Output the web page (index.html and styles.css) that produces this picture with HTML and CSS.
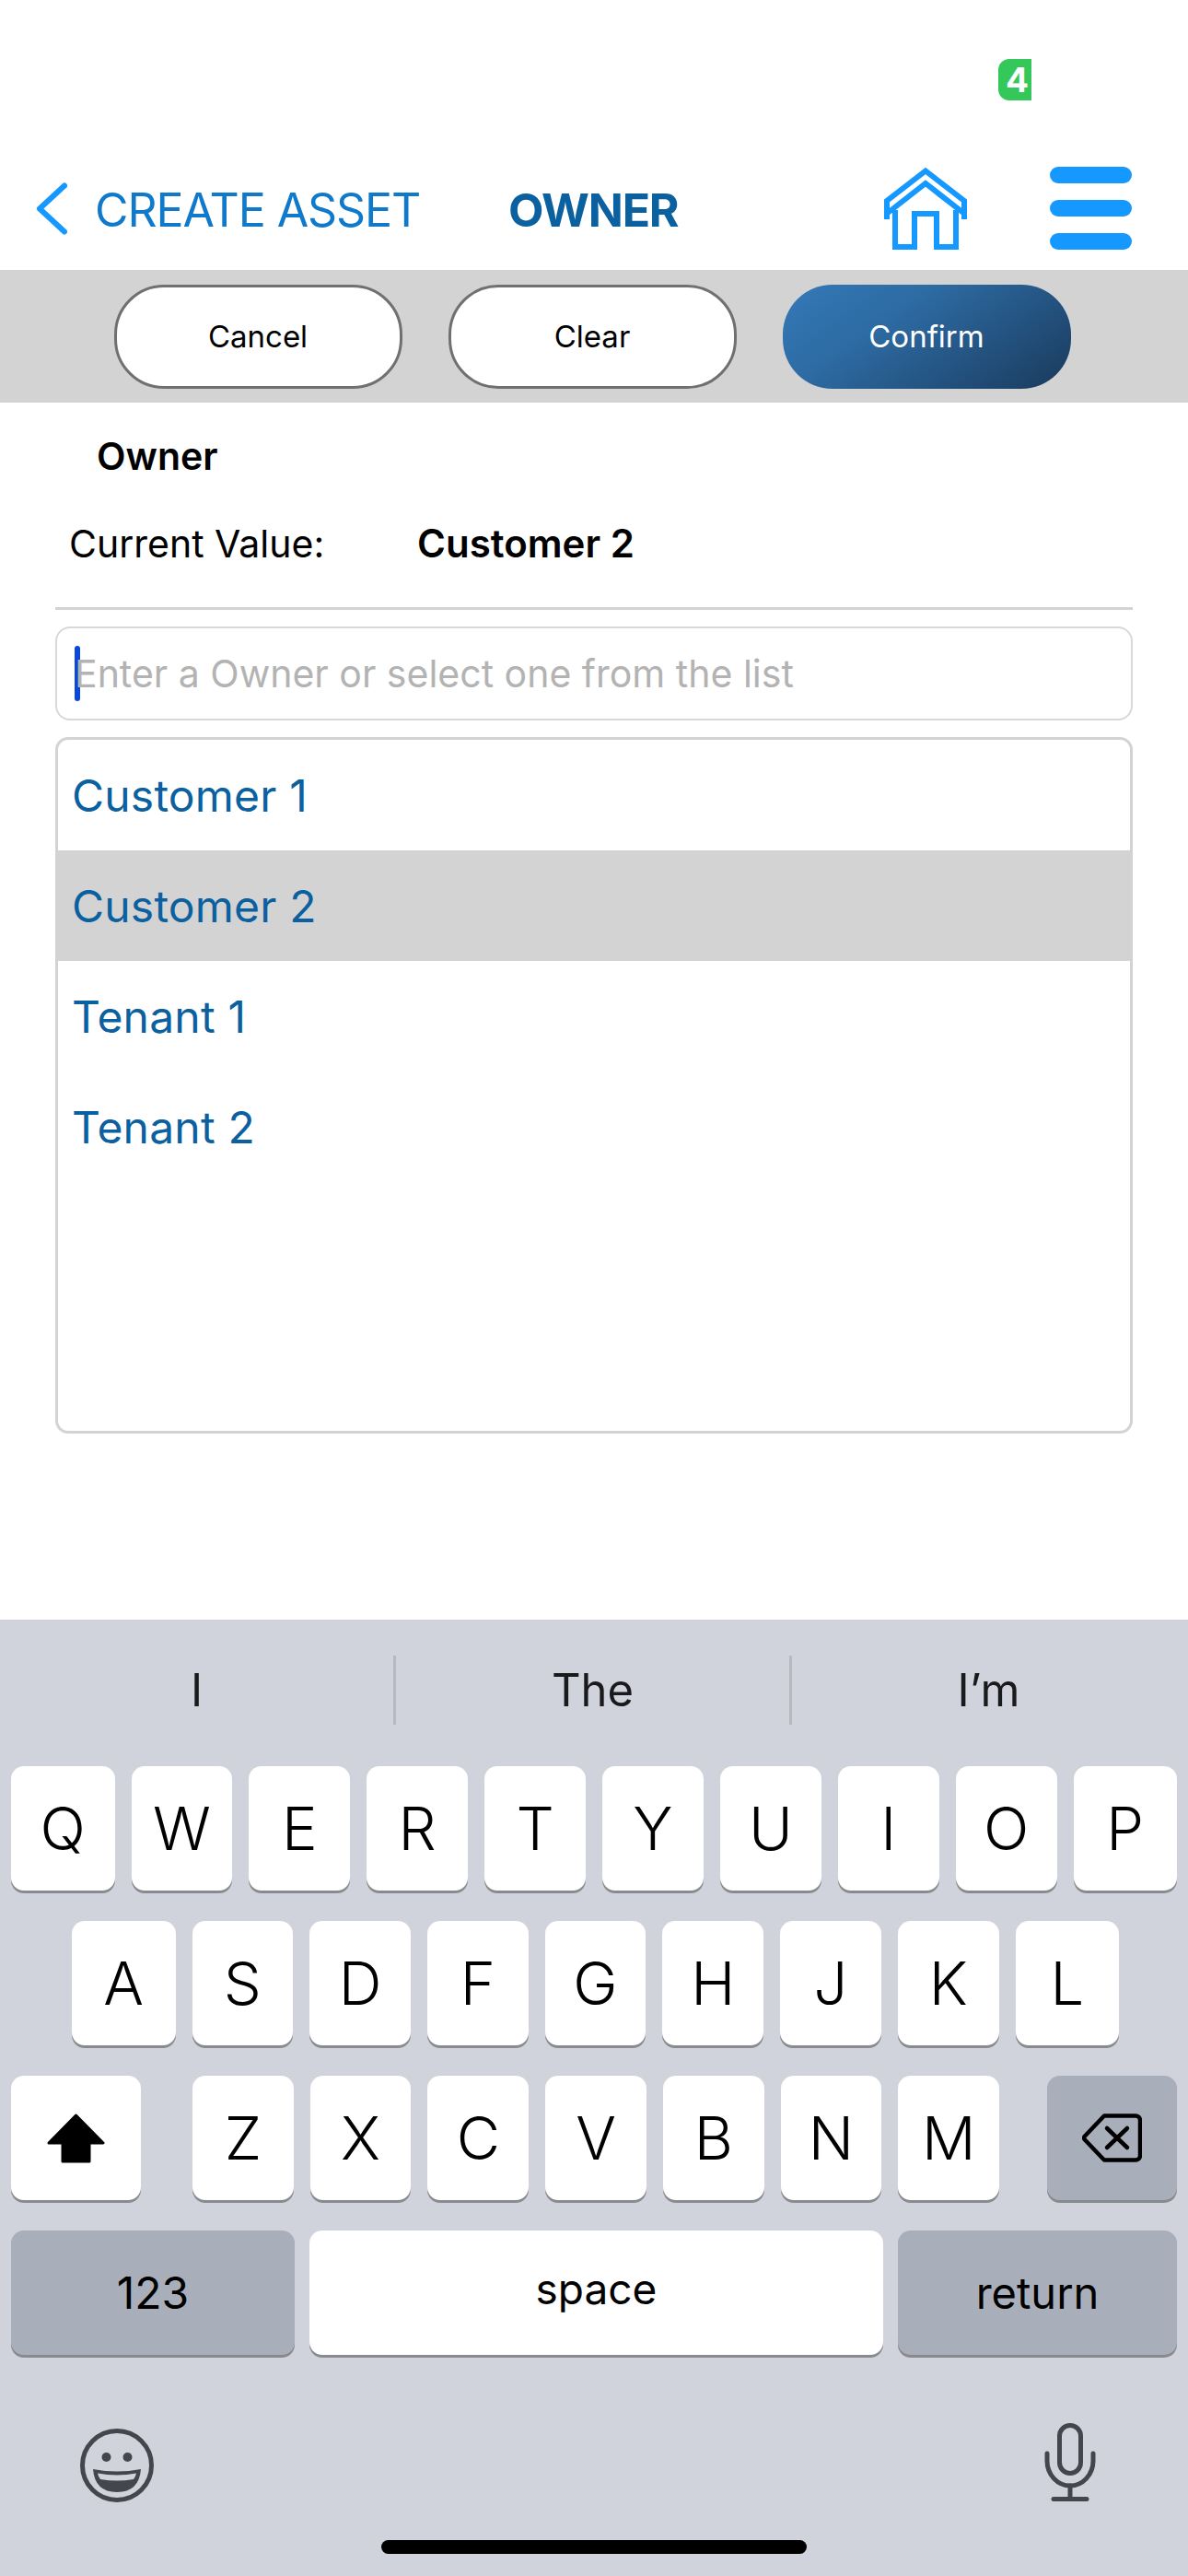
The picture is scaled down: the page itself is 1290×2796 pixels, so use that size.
FILE: index.html
```html
<!DOCTYPE html>
<html lang="en">
<head>
  <meta charset="UTF-8">
  <meta name="viewport" content="width=device-width, initial-scale=1.0">
  <title>Owner</title>
  <link rel="stylesheet" href="styles.css">
</head>
<body>

  <div class="status">
    <span class="badge">4</span>
  </div>

  <header class="nav">
    <div class="nav-back">
      <svg class="chevron" viewBox="0 0 34 57"><path d="M31 3.5 L4 28.5 L31 53.5"/></svg>
      <span>CREATE ASSET</span>
    </div>
    <div class="nav-title">OWNER</div>
    <svg class="home-icon" viewBox="0 0 90 90">
      <path d="M3 57 V37 L45 4.500 L87 37 V57"/>
      <path d="M4 50 L45 18 L86 50"/>
      <path d="M12 47 V87 H33 V51 H57 V87 H78 V47"/>
    </svg>
    <div class="menu-icon"><span></span><span></span><span></span></div>
  </header>

  <div class="toolbar">
    <button class="btn">Cancel</button>
    <button class="btn">Clear</button>
    <button class="btn btn-primary">Confirm</button>
  </div>

  <h2 class="field-title">Owner</h2>
  <div class="current">
    <span class="current-label">Current Value:</span>
    <span class="current-value">Customer 2</span>
  </div>
  <div class="divider"></div>

  <div class="search">
    <span class="caret"></span>
    <span class="placeholder">Enter a Owner or select one from the list</span>
  </div>

  <ul class="list">
    <li>Customer 1</li>
    <li class="selected">Customer 2</li>
    <li>Tenant 1</li>
    <li>Tenant 2</li>
  </ul>

  <div class="keyboard">
    <div class="suggestions">
      <div>I</div>
      <div>The</div>
      <div>I’m</div>
    </div>

    <div class="key-row">
      <div class="key edge">Q</div><div class="key">W</div><div class="key">E</div><div class="key">R</div><div class="key">T</div>
      <div class="key">Y</div><div class="key">U</div><div class="key">I</div><div class="key">O</div><div class="key edge">P</div>
    </div>
    <div class="key-row row-2">
      <div class="key edge">A</div><div class="key">S</div><div class="key">D</div><div class="key">F</div><div class="key">G</div>
      <div class="key">H</div><div class="key">J</div><div class="key">K</div><div class="key edge">L</div>
    </div>
    <div class="key-row row-3">
      <div class="key shift">
        <svg class="shift-icon" viewBox="0 0 63 54"><path d="M31.5 2 L61 32 H46 V52 H17 V32 H2 Z"/></svg>
      </div>
      <div class="letters">
        <div class="key">Z</div><div class="key">X</div><div class="key">C</div><div class="key">V</div>
        <div class="key">B</div><div class="key">N</div><div class="key">M</div>
      </div>
      <div class="key dark shift">
        <svg class="delete-icon" viewBox="0 0 65 53">
          <path d="M24 2.5 H58 a5 5 0 0 1 5 5 V45.5 a5 5 0 0 1 -5 5 H24 L3 28.5 a3 3 0 0 1 0 -4 Z"/>
          <path d="M27 16 L49 37 M49 16 L27 37"/>
        </svg>
      </div>
    </div>
    <div class="key-row row-4">
      <div class="key dark word num">123</div>
      <div class="key word space">space</div>
      <div class="key dark word ret">return</div>
    </div>

    <div class="kb-bottom">
      <svg class="emoji-icon" viewBox="0 0 80 80">
        <circle class="ring" cx="40" cy="40" r="37.5"/>
        <circle class="solid" cx="28.5" cy="31" r="5"/>
        <circle class="solid" cx="51.5" cy="31" r="5"/>
        <path class="solid" d="M14 44 Q40 49 66 44 Q64 69 40 69 Q16 69 14 44 Z"/>
        <path class="teeth" d="M19 48.500 Q40 52.500 61 48.500 Q60 53 58 55 Q40 58 22 55 Q20 53 19 48.500 Z"/>
      </svg>
      <svg class="mic-icon" viewBox="0 0 56 85">
        <rect x="16.500" y="2.500" width="23" height="52" rx="11.500"/>
        <path d="M3 33 V41 a25 27 0 0 0 50 0 V33"/>
        <path d="M28 68 V82 M10 82.500 H46"/>
      </svg>
    </div>
    <div class="home-bar"></div>
  </div>

</body>
</html>
```

FILE: styles.css
```css
* {
  box-sizing: border-box;
}

body {
  font-family: Inter, "Liberation Sans", sans-serif;
  margin: 0;
  width: 1290px;
  height: 2796px;
  display: flex;
  flex-direction: column;
  background-color: #fff;
  color: #000;
  overflow: hidden;
}

/* status bar */
.status {
  height: 181px;
  padding: 64px 170px 0 0;
  display: flex;
  justify-content: flex-end;
  align-items: flex-start;
}

.badge {
  width: 36px;
  height: 45px;
  padding-left: 8px;
  background-color: #34c759;
  border-radius: 12px 0 0 12px;
  color: #fff;
  font-size: 37px;
  font-weight: 700;
  line-height: 45px;
  overflow: hidden;
}

/* nav */
.nav {
  height: 112px;
  padding: 0 61px 22px 39px;
  display: flex;
  align-items: center;
}

.nav-back {
  width: 513px;
  display: flex;
  align-items: center;
  gap: 30px;
  color: #0f7acb;
  font-size: 50px;
  letter-spacing: -1.1px;
}

.nav-back span {
  padding-top: 3px;
}

.chevron {
  width: 34px;
  height: 57px;
  fill: none;
  stroke: #1598ff;
  stroke-width: 6;
  stroke-linecap: round;
  stroke-linejoin: round;
}

.nav-title {
  padding-top: 3px;
  color: #0b60a0;
  font-size: 50px;
  font-weight: 700;
  letter-spacing: -1.2px;
}

.home-icon {
  width: 90px;
  height: 90px;
  margin-left: auto;
  fill: none;
  stroke: #1598ff;
  stroke-width: 6;
}

.menu-icon {
  width: 89px;
  height: 90px;
  margin-left: 90px;
  display: flex;
  flex-direction: column;
  justify-content: space-between;
}

.menu-icon span {
  height: 18px;
  background-color: #1598ff;
  border-radius: 9px;
}

/* toolbar */
.toolbar {
  height: 144px;
  padding-right: 4px;
  background-color: #d3d3d3;
  display: flex;
  justify-content: center;
  align-items: center;
  gap: 50px;
}

.btn {
  width: 313px;
  height: 113px;
  border: 3px solid #707070;
  border-radius: 54px;
  background-color: #fff;
  color: #000;
  font-family: inherit;
  font-size: 33px;
}

.btn-primary {
  border: 0;
  color: #fff;
  background: linear-gradient(145deg, #3479b8 0%, #2d6ba3 35%, #1a3a5c 100%);
}

/* field */
.field-title {
  margin: 38px 0 0 105px;
  font-size: 41px;
  font-weight: 600;
  line-height: 40px;
}

.current {
  margin: 50px 0 0 75px;
  display: flex;
  font-size: 41px;
  line-height: 50px;
}

.current-label {
  width: 378px;
}

.current-value {
  font-size: 42px;
  font-weight: 600;
}

.divider {
  height: 3px;
  margin: 44px 60px 0;
  background-color: #d3d3d3;
}

.search {
  height: 102px;
  margin: 18px 60px 0;
  padding-left: 19px;
  border: 2px solid #d8d8d8;
  border-radius: 16px;
  display: flex;
  align-items: center;
}

.caret {
  width: 6px;
  height: 60px;
  margin-right: -6px;
  background-color: #0a46e0;
  border-radius: 3px;
}

.placeholder {
  color: #b3b3b3;
  font-size: 41px;
}

.list {
  height: 756px;
  margin: 18px 60px 0;
  padding: 0;
  list-style: none;
  border: 3px solid #d3d3d3;
  border-radius: 14px;
  overflow: hidden;
}

.list li {
  height: 120px;
  padding-left: 15px;
  color: #0b60a0;
  font-size: 48px;
  letter-spacing: 0.2px;
  line-height: 122px;
}

.list li.selected {
  background-color: #d3d3d3;
}

/* keyboard */
.keyboard {
  height: 1038px;
  margin-top: auto;
  background-color: #d0d3db;
}

.suggestions {
  height: 159px;
  padding: 39px 3px 0 0;
  display: flex;
  align-items: flex-start;
}

.suggestions div {
  flex: 1;
  height: 75px;
  border-left: 3px solid #b6b9c0;
  color: #1a1a1c;
  font-size: 49px;
  line-height: 75px;
  text-align: center;
}

.suggestions div:first-child {
  border-left: 0;
}

.key-row {
  height: 135px;
  margin-bottom: 33px;
  padding: 0 12px;
  display: flex;
  gap: 18px;
}

.row-2 {
  padding: 0 75px 0 78px;
}

.row-3 {
  gap: 56px;
}

.row-4 {
  gap: 16px;
}

.key {
  flex: 1;
  border-radius: 14px;
  background-color: #fff;
  box-shadow: 0 3px 0 #898a8d;
  display: flex;
  justify-content: center;
  align-items: center;
  font-size: 65px;
  font-weight: 350;
}

.key.edge {
  flex: 0 0 112.500px;
}

.key.shift {
  flex: 0 0 141px;
}

.letters {
  flex: 1;
  margin-right: -4px;
  display: flex;
  gap: 18px;
}

.key.dark {
  background-color: #a9afba;
}

.key.word {
  font-size: 46px;
  font-weight: 400;
}

.key.num {
  flex: 0 0 308px;
  font-size: 48px;
}

.key.ret {
  flex: 0 0 303px;
  font-size: 47px;
}

.key.space {
  padding-bottom: 10px;
}

.shift-icon {
  width: 63px;
  height: 54px;
  stroke: #000;
  stroke-width: 3;
  stroke-linejoin: round;
}

.delete-icon {
  width: 65px;
  height: 53px;
  fill: none;
  stroke: #000;
  stroke-width: 4.500;
  stroke-linejoin: round;
  stroke-linecap: round;
}

.kb-bottom {
  height: 86px;
  margin-top: 74px;
  padding: 0 100px 0 87px;
  display: flex;
  justify-content: space-between;
}

.emoji-icon {
  width: 80px;
  height: 80px;
  align-self: flex-end;
}

.emoji-icon .ring {
  fill: none;
  stroke: #43474d;
  stroke-width: 5;
}

.emoji-icon .solid {
  fill: #43474d;
}

.emoji-icon .teeth {
  fill: #d0d3db;
}

.mic-icon {
  width: 56px;
  height: 85px;
  fill: none;
  stroke: #43474d;
  stroke-width: 5;
  stroke-linecap: round;
}

.home-bar {
  width: 462px;
  height: 15px;
  margin: 41px 0 0 414px;
  background-color: #000;
  border-radius: 8px;
}
```
